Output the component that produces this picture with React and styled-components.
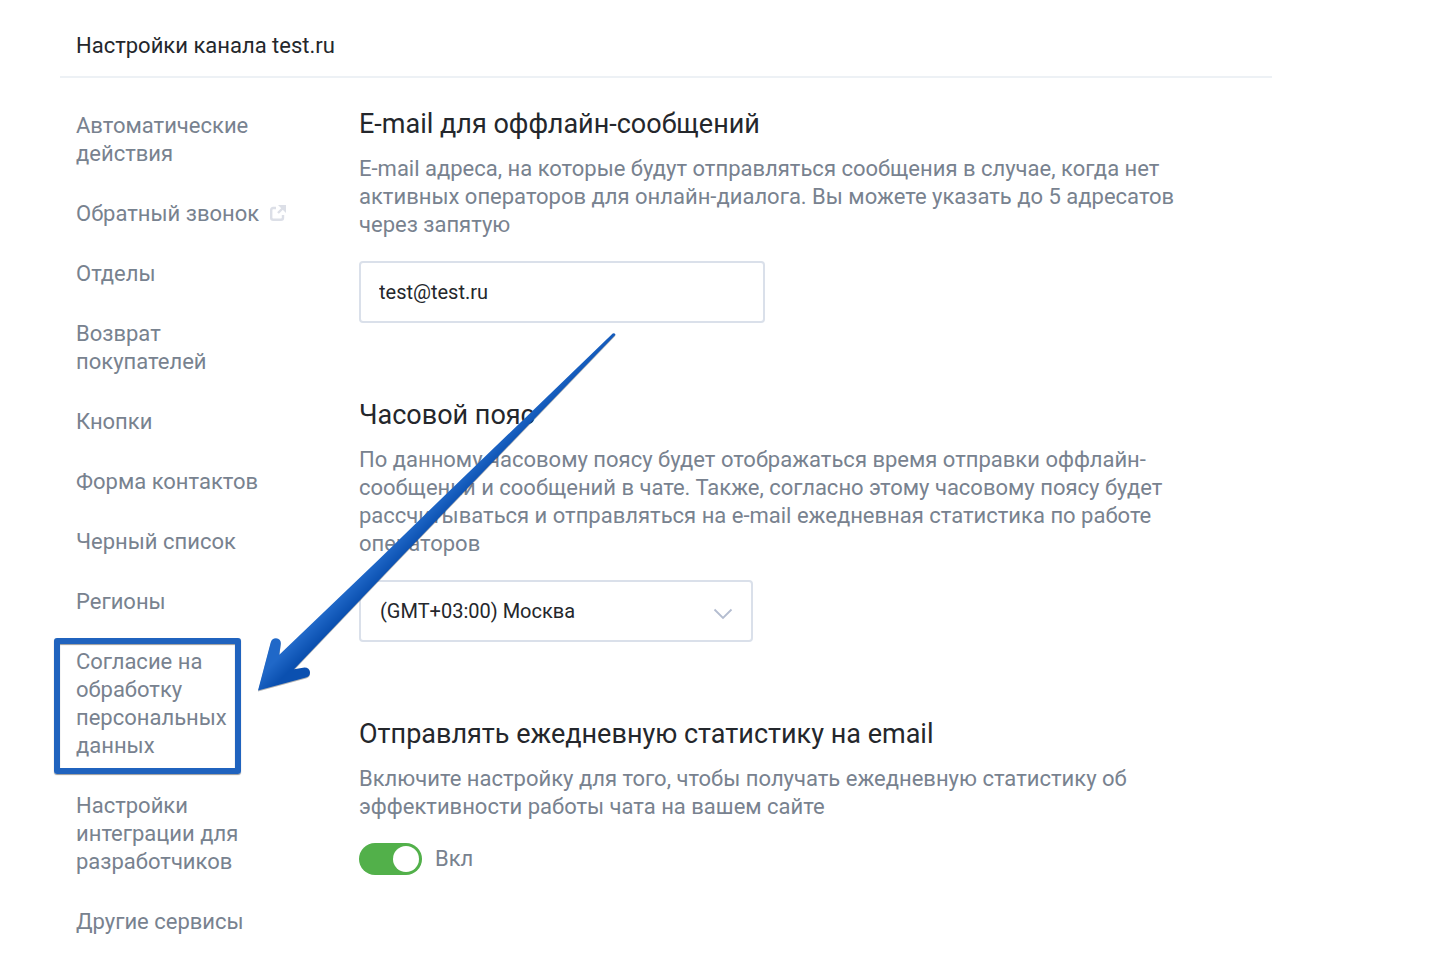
import React, { useState } from 'react';
import styled, { createGlobalStyle } from 'styled-components';

const GlobalStyle = createGlobalStyle`
  * {
    box-sizing: border-box;
  }

  body {
    margin: 0;
    background: #fff;
    color: #24272c;
    font-family: Roboto, 'Noto Sans', sans-serif;
    font-size: 22px;
    line-height: 28px;
  }
`;

const Page = styled.div`
  position: relative;
  max-width: 1272px;
  padding: 0 0 16px 60px;
`;

const Header = styled.header`
  padding: 32px 16px 16px;
  border-bottom: 2px solid #edf1f5;
`;

const PageTitle = styled.h1`
  margin: 0;
  font-size: 22px;
  font-weight: 400;
`;

const Columns = styled.div`
  display: flex;
  gap: 67px;
  padding: 30px 16px 0;
`;

const Sidebar = styled.nav`
  flex: 0 0 216px;
`;

const MenuList = styled.ul`
  display: flex;
  flex-direction: column;
  gap: 32px;
  margin: 0;
  padding: 4px 0 0;
  list-style: none;
`;

const MenuItem = styled.li`
  position: relative;
`;

const MenuLink = styled.a`
  color: #78828f;
  text-decoration: none;

  &:hover {
    color: #24272c;
  }
`;

const ExternalIcon = styled.svg`
  width: 16px;
  height: 16px;
  margin-left: 11px;
`;

const Highlight = styled.span`
  position: absolute;
  top: -10px;
  bottom: -14px;
  left: -22px;
  width: 187px;
  border: 6px solid #2063be;
  border-radius: 3px;
  box-shadow: 0 1px 1px rgba(0, 0, 0, 0.4), inset 0 1px 1px rgba(0, 0, 0, 0.4);
  pointer-events: none;
`;

const Content = styled.main`
  flex: 1;
  max-width: 850px;
  display: flex;
  flex-direction: column;
  gap: 76px;
`;

const SectionTitle = styled.h2`
  margin: 0 0 15px;
  font-size: 27px;
  line-height: 32px;
  font-weight: 400;
`;

const Description = styled.p`
  margin: 0 0 22px;
  color: #78828f;
`;

const TextField = styled.input`
  display: block;
  width: 406px;
  max-width: 100%;
  height: 62px;
  padding: 0 18px;
  border: 2px solid #dae0ea;
  border-radius: 4px;
  background: #fff;
  color: #24272c;
  font: inherit;
  font-size: 20px;
`;

const SelectWrap = styled.div`
  position: relative;
  width: 394px;
  max-width: 100%;
`;

const SelectField = styled.select`
  display: block;
  appearance: none;
  width: 100%;
  height: 62px;
  padding: 0 48px 0 19px;
  border: 2px solid #dae0ea;
  border-radius: 4px;
  background: #fff;
  color: #24272c;
  font: inherit;
  font-size: 20px;
`;

const Chevron = styled.svg`
  position: absolute;
  top: 28px;
  right: 20px;
  width: 20px;
  height: 12px;
  pointer-events: none;
`;

const SwitchLabel = styled.label`
  display: inline-flex;
  align-items: center;
  gap: 13px;
  color: #78828f;
`;

const Switch = styled.input`
  appearance: none;
  display: flex;
  align-items: center;
  width: 63px;
  height: 32px;
  margin: 0;
  padding: 3px;
  border-radius: 16px;
  background: #c8cfd8;
  cursor: pointer;

  &::before {
    content: '';
    width: 26px;
    height: 26px;
    border-radius: 50%;
    background: #fff;
  }

  &:checked {
    justify-content: flex-end;
    background: #52b04a;
  }
`;

const Arrow = styled.svg`
  position: absolute;
  top: 330px;
  left: 255px;
  width: 365px;
  height: 365px;
  pointer-events: none;
  filter: drop-shadow(0 1px 0 rgba(0, 0, 0, 0.3));
`;

const menu = [
  { label: 'Автоматические действия' },
  { label: 'Обратный звонок', external: true },
  { label: 'Отделы' },
  { label: 'Возврат покупателей' },
  { label: 'Кнопки' },
  { label: 'Форма контактов' },
  { label: 'Черный список' },
  { label: 'Регионы' },
  { label: 'Согласие на обработку персональных данных', highlighted: true },
  { label: 'Настройки интеграции для разработчиков' },
  { label: 'Другие сервисы' },
];

const App = () => {
  const [email, setEmail] = useState('test@test.ru');
  const [daily, setDaily] = useState(true);

  return (
    <>
      <GlobalStyle />
      <Page>
        <Header>
          <PageTitle>Настройки канала test.ru</PageTitle>
        </Header>

        <Columns>
          <Sidebar>
            <MenuList>
              {menu.map((item) => (
                <MenuItem key={item.label}>
                  <MenuLink href="#">
                    {item.label}
                    {item.external && (
                      <ExternalIcon viewBox="0 0 16 16" fill="none" stroke="#dcdfe7" strokeWidth="2.4">
                        <path d="M6 3H3.2Q1.2 3 1.2 5V12.8Q1.2 14.8 3.2 14.8H11Q13 14.8 13 12.8V10" />
                        <path d="M8 8L13 3" />
                        <path d="M8 0H16V8Z" fill="#dcdfe7" stroke="none" />
                      </ExternalIcon>
                    )}
                  </MenuLink>
                  {item.highlighted && <Highlight />}
                </MenuItem>
              ))}
            </MenuList>
          </Sidebar>

          <Content>
            <section>
              <SectionTitle id="email-title">E-mail для оффлайн-сообщений</SectionTitle>
              <Description>
                E-mail адреса, на которые будут отправляться сообщения в случае, когда нет
                активных операторов для онлайн-диалога. Вы можете указать до 5 адресатов
                через запятую
              </Description>
              <TextField
                type="text"
                aria-labelledby="email-title"
                value={email}
                onChange={(e) => setEmail(e.target.value)}
              />
            </section>

            <section>
              <SectionTitle id="timezone-title">Часовой пояс</SectionTitle>
              <Description>
                По данному часовому поясу будет отображаться время отправки оффлайн-сообщений
                и сообщений в чате. Также, согласно этому часовому поясу будет рассчитываться
                и отправляться на e-mail ежедневная статистика по работе операторов
              </Description>
              <SelectWrap>
                <SelectField aria-labelledby="timezone-title" defaultValue="msk">
                  <option value="msk">(GMT+03:00) Москва</option>
                </SelectField>
                <Chevron viewBox="0 0 20 12" fill="none" stroke="#b4bdd0" strokeWidth="1.8">
                  <path d="M1.5 1.5L10 10L18.5 1.5" />
                </Chevron>
              </SelectWrap>
            </section>

            <section>
              <SectionTitle>Отправлять ежедневную статистику на email</SectionTitle>
              <Description>
                Включите настройку для того, чтобы получать ежедневную статистику об
                эффективности работы чата на вашем сайте
              </Description>
              <SwitchLabel>
                <Switch
                  type="checkbox"
                  checked={daily}
                  onChange={(e) => setDaily(e.target.checked)}
                />
                {daily ? 'Вкл' : 'Выкл'}
              </SwitchLabel>
            </section>
          </Content>
        </Columns>

        <Arrow viewBox="255 330 365 365">
          <defs>
            <linearGradient id="shaft" gradientUnits="userSpaceOnUse" x1="382" y1="554" x2="394" y2="566">
              <stop offset="0" stopColor="#2068c8" />
              <stop offset="1" stopColor="#0b50b0" />
            </linearGradient>
          </defs>
          <path
            fill="url(#shaft)"
            d="M258 690.5L270.7 642.5Q272 638.3 276 638.3Q281 639 280.8 643.5L279.3 654.7L378.3 560L440 500L612.7 333.5Q615 332.5 615.5 334.7L440 516.7L398.3 560L294 669.3L304.5 667.4Q309.5 667.5 310 672.3Q310 676.5 306 677.6Z"
          />
        </Arrow>
      </Page>
    </>
  );
};

export default App;
